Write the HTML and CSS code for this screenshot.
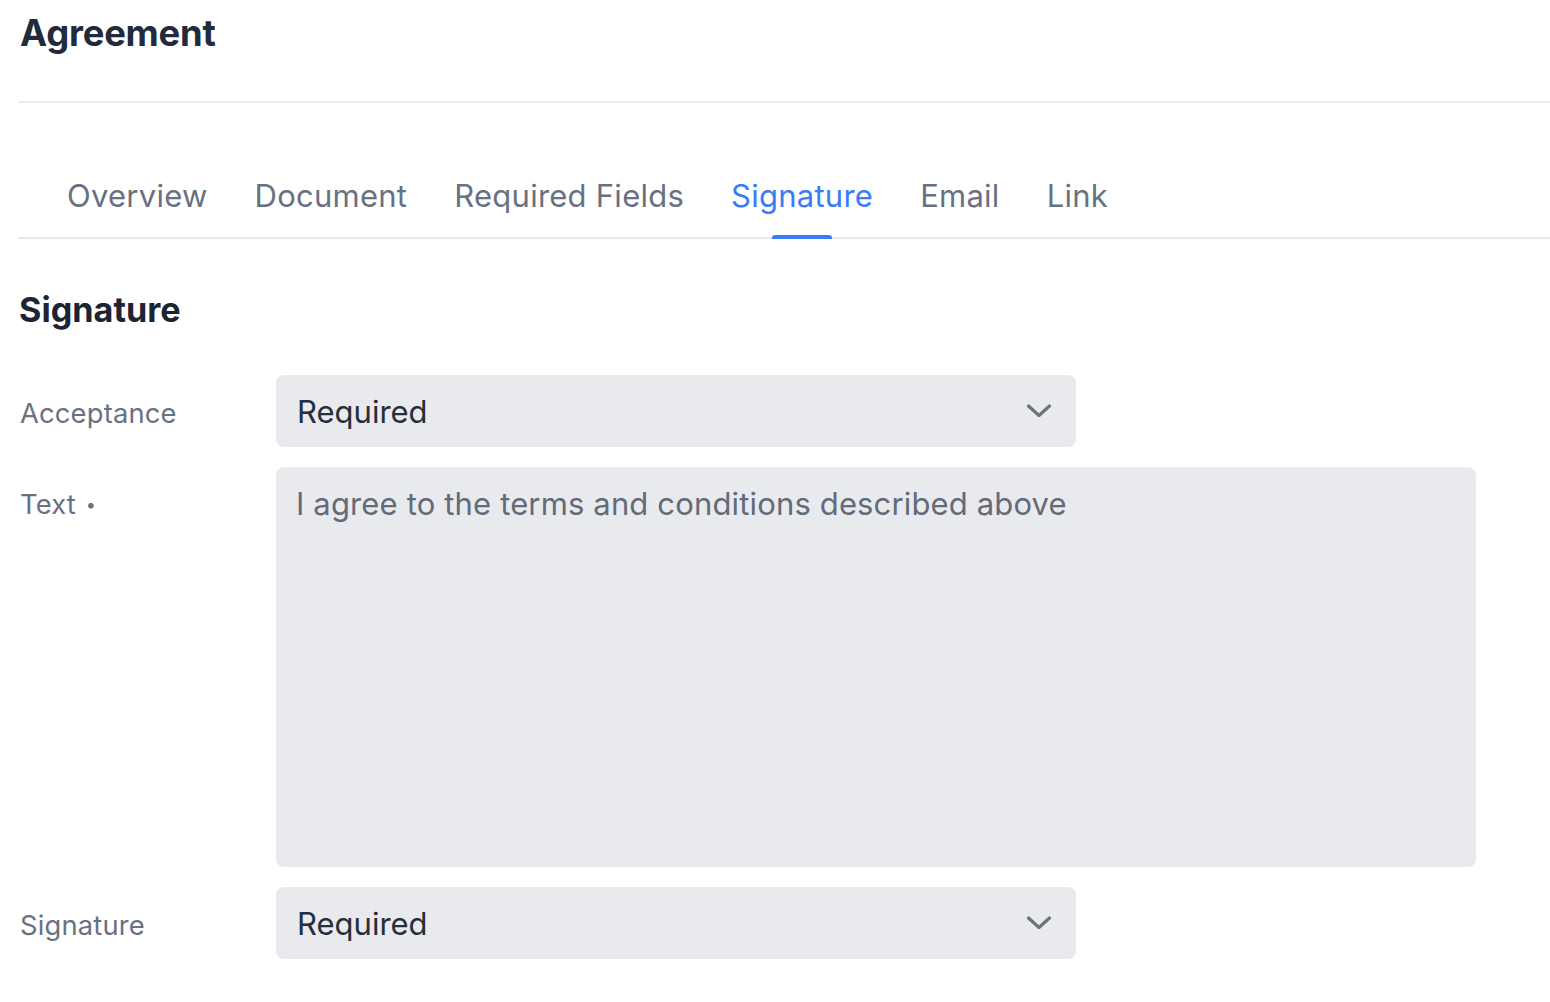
FILE: index.html
```html
<!DOCTYPE html>
<html lang="en">
<head>
<meta charset="utf-8">
<title>Agreement</title>
<link rel="stylesheet" href="styles.css">
</head>
<body>
<div class="page">
  <header class="page-header">
    <h1 class="page-title">Agreement</h1>
  </header>
  <nav class="tabs">
    <a class="tab">Overview</a>
    <a class="tab">Document</a>
    <a class="tab">Required Fields</a>
    <a class="tab tab-active">Signature</a>
    <a class="tab">Email</a>
    <a class="tab">Link</a>
  </nav>
  <section class="section">
    <h2 class="section-title">Signature</h2>
    <div class="form">
      <label class="label">Acceptance</label>
      <div class="select">
        <span class="select-value">Required</span>
        <svg class="chevron" width="26" height="16" viewBox="0 0 26 16"><path d="M2.5 3 L13 12.5 L23.5 3" fill="none" stroke="#6b7280" stroke-width="3.2" stroke-linecap="round" stroke-linejoin="round"/></svg>
      </div>
      <label class="label label-top">Text <span class="req">•</span></label>
      <div class="textarea">I agree to the terms and conditions described above</div>
      <label class="label">Signature</label>
      <div class="select">
        <span class="select-value">Required</span>
        <svg class="chevron" width="26" height="16" viewBox="0 0 26 16"><path d="M2.5 3 L13 12.5 L23.5 3" fill="none" stroke="#6b7280" stroke-width="3.2" stroke-linecap="round" stroke-linejoin="round"/></svg>
      </div>
    </div>
  </section>
</div>
</body>
</html>
```
FILE: styles.css
```css
* { box-sizing: border-box; }
html, body { margin: 0; padding: 0; background: #ffffff; }
body {
  font-family: Inter, "Noto Sans", "Liberation Sans", sans-serif;
  color: #1f2937;
}
.page {
  padding-left: 18px;
}
.page-header {
  height: 103px;
  border-bottom: 2px solid #ededef;
  padding-left: 2px;
}
.page-title {
  margin: 0;
  padding-top: 11px;
  font-size: 36.4px;
  line-height: 44px;
  font-weight: 700;
  color: #222b3b;
  letter-spacing: -0.2px;
}
.tabs {
  display: flex;
  gap: 47px;
  padding-left: 49px;
  margin-top: 0;
  height: 136px;
  align-items: flex-end;
  border-bottom: 2px solid #e8e9ed;
}
.tab {
  position: relative;
  font-size: 31px;
  line-height: 36px;
  letter-spacing: 0.25px;
  color: #687181;
  padding-bottom: 23px;
  cursor: pointer;
}
.tab-active {
  color: #3a7cf4;
}
.tab-active::after {
  content: "";
  position: absolute;
  left: 50%;
  bottom: -2px;
  width: 60px;
  margin-left: -30px;
  height: 4px;
  border-radius: 3px 3px 0 0;
  background: #3a7cf4;
}
.section {
  padding-left: 1px;
}
.section-title {
  margin: 0;
  padding-top: 50px;
  font-size: 34.2px;
  line-height: 42px;
  font-weight: 700;
  color: #1c2433;
}
.form {
  margin-top: 44px;
  display: grid;
  grid-template-columns: 257px 1200px;
  row-gap: 20px;
  align-items: center;
}
.label {
  font-size: 27.3px;
  letter-spacing: 0.2px;
  color: #687181;
  padding-left: 1px;
  padding-top: 4px;
}
.label-top {
  align-self: start;
  padding-top: 21px;
}
.req {
  font-size: 18px;
  vertical-align: 3px;
  margin-left: 2px;
}
.select {
  width: 800px;
  height: 72px;
  background: #e9eaee;
  border-radius: 8px;
  display: flex;
  align-items: center;
  justify-content: space-between;
  padding: 0 24px 0 21px;
}
.select-value {
  font-size: 31px;
  color: #252e3d;
}
.chevron { display: block; }
.textarea {
  width: 1200px;
  height: 400px;
  background: #e9eaee;
  border-radius: 8px;
  padding: 17px 20px;
  font-size: 31px;
  line-height: 40px;
  letter-spacing: 0.15px;
  color: #636b79;
}
```
